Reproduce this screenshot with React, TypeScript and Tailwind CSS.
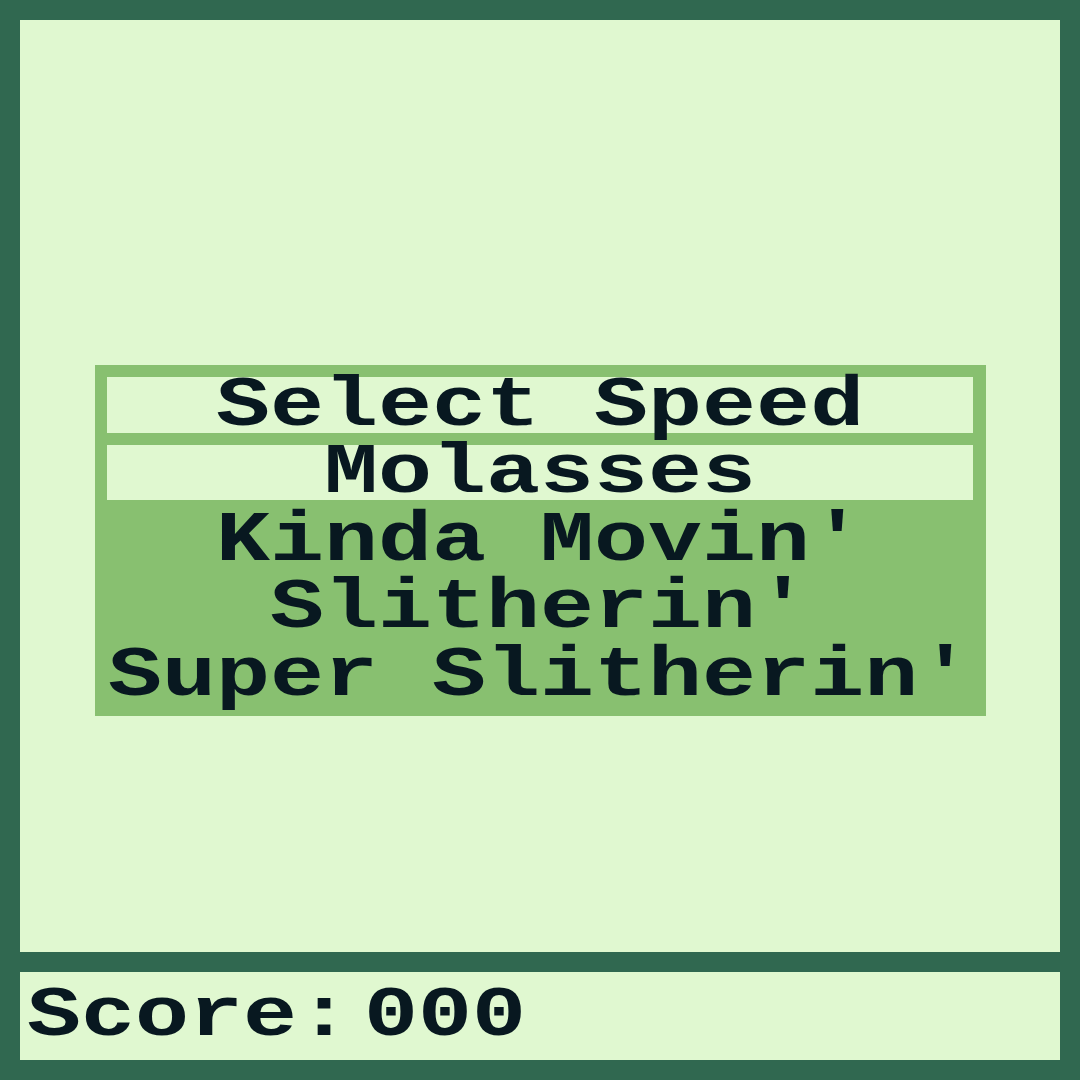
const speeds = ['Molasses', "Kinda Movin'", "Slitherin'", "Super Slitherin'"];

function Row({ label, light }: { label: string; light: boolean }) {
  return (
    <div
      className={`h-[67.5px] border-[6.75px] border-[#88c070] flex items-center justify-center overflow-visible ${
        light ? 'bg-[#e0f8d0]' : 'bg-[#88c070]'
      }`}
    >
      <span className="whitespace-nowrap leading-[50px] pt-[3px] scale-x-[1.286] origin-center">
        {label}
      </span>
    </div>
  );
}

export default function App() {
  const selected = 0;

  return (
    <div className="w-[1080px] h-[1080px] bg-[#306850] p-[20.25px] flex flex-col gap-[20.25px] font-['Liberation_Mono','DejaVu_Sans_Mono',monospace] font-bold text-[70px] text-[#081820]">
      <div className="h-[931.5px] bg-[#e0f8d0] flex flex-col items-center pt-[344.25px]">
        <div className="w-[891px] bg-[#88c070] p-[6.75px] flex flex-col">
          <Row label="Select Speed" light />
          {speeds.map((s, i) => (
            <Row key={s} label={s} light={i === selected} />
          ))}
        </div>
      </div>
      <div className="h-[87.75px] bg-[#e0f8d0] flex items-center px-[6.75px]">
        <span className="whitespace-nowrap leading-[50px] pt-[3px] scale-x-[1.286] origin-left">
          Score:<span className="ml-[10px]">000</span>
        </span>
      </div>
    </div>
  );
}
